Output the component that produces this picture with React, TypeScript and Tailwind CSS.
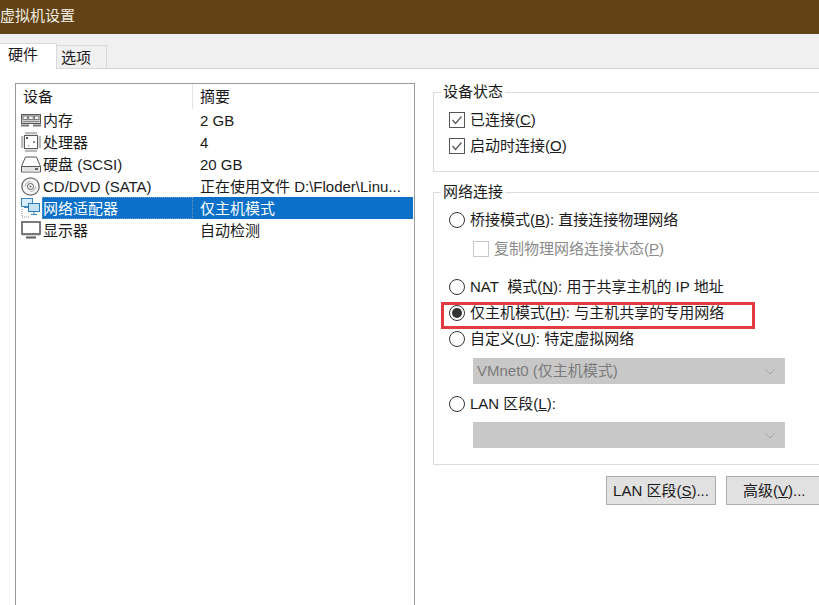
import type { ReactNode } from "react";

function MemoryIcon() {
  return (
    <svg width="20" height="13" viewBox="0 0 20 13" fill="none">
      <rect x="0.5" y="0.5" width="19" height="9" fill="#cfcfcf" stroke="#5a5a5a" />
      <rect x="2" y="2" width="4.5" height="3.5" fill="#f4f4f4" stroke="#5f5f5f" strokeWidth="0.8" />
      <rect x="7.75" y="2" width="4.5" height="3.5" fill="#f4f4f4" stroke="#5f5f5f" strokeWidth="0.8" />
      <rect x="13.5" y="2" width="4.5" height="3.5" fill="#f4f4f4" stroke="#5f5f5f" strokeWidth="0.8" />
      <path d="M2 7.5h16" stroke="#8a8a8a" />
      <path d="M0 11.5h8M12 11.5h8" stroke="#777" strokeWidth="2" />
    </svg>
  );
}

function CpuIcon() {
  return (
    <svg width="20" height="20" viewBox="0 0 20 20" fill="none">
      <rect x="3.5" y="3.5" width="13" height="13" fill="#fff" stroke="#5c5c5c" />
      <path d="M5 0v2.5M7 0v2.5M9 0v2.5M11 0v2.5M13 0v2.5M15 0v2.5M5 17.5v2.5M7 17.5v2.5M9 17.5v2.5M11 17.5v2.5M13 17.5v2.5M15 17.5v2.5M0 5h2.500M0 7h2.500M0 9h2.500M0 11h2.500M0 13h2.500M0 15h2.500M17.500 5h2.500M17.500 7h2.500M17.500 9h2.500M17.500 11h2.500M17.500 13h2.500M17.500 15h2.500" stroke="#777" />
      <rect x="5" y="5" width="2" height="2" fill="#555" />
      <rect x="12" y="9" width="2" height="2" fill="#888" />
      <rect x="7" y="13" width="1.500" height="1.500" fill="#aaa" />
    </svg>
  );
}

function DiskIcon() {
  return (
    <svg width="20" height="17" viewBox="0 0 20 17" fill="none">
      <path d="M4.500 1h11l4 9.500v5.500H.5v-5.500z" fill="#fff" stroke="#555" />
      <path d="M.5 10.500h19" stroke="#555" />
      <rect x="1.500" y="11" width="17" height="4.500" fill="#e2e2e2" />
      <rect x="14" y="12" width="3" height="2" fill="#666" />
    </svg>
  );
}

function CdIcon() {
  return (
    <svg width="19" height="19" viewBox="0 0 19 19" fill="none">
      <circle cx="9.500" cy="9.500" r="8.700" fill="#f4f4f4" stroke="#6a6a6a" strokeWidth="1.300" />
      <path d="M4.500 9.500a5 5 0 0 1 5-5" stroke="#aaa" />
      <path d="M14.500 9.500a5 5 0 0 1-5 5" stroke="#aaa" />
      <circle cx="9.500" cy="9.500" r="3" fill="#fff" stroke="#5a5a5a" />
      <circle cx="9.500" cy="9.500" r="1" fill="#5a5a5a" />
    </svg>
  );
}

function NetIcon() {
  return (
    <svg width="19" height="20" viewBox="0 0 19 20" fill="none">
      <rect x="0.5" y="0.5" width="11" height="8" fill="#d8edfb" stroke="#3d87bf" />
      <path d="M3 9.500h5" stroke="#3d87bf" />
      <rect x="7.500" y="5.500" width="11" height="8" fill="#c4e3f8" stroke="#2f7bb5" />
      <path d="M13 14v2" stroke="#3d87bf" />
      <path d="M10 16.500h6" stroke="#3d87bf" />
      <path d="M1 11v8h7" stroke="#999" strokeDasharray="1 1" />
    </svg>
  );
}

function MonitorIcon() {
  return (
    <svg width="20" height="18" viewBox="0 0 20 18" fill="none">
      <rect x="1" y="1" width="18" height="12" fill="#fff" stroke="#5a5a5a" strokeWidth="1.600" />
      <path d="M1 13.500h18" stroke="#777" strokeWidth="1.600" />
      <path d="M5 16.500h10" stroke="#5a5a5a" strokeWidth="2" />
    </svg>
  );
}

const rows = [
  { icon: <MemoryIcon />, name: "内存", value: "2 GB" },
  { icon: <CpuIcon />, name: "处理器", value: "4" },
  { icon: <DiskIcon />, name: "硬盘 (SCSI)", value: "20 GB" },
  { icon: <CdIcon />, name: "CD/DVD (SATA)", value: "正在使用文件 D:\\Floder\\Linu..." },
  { icon: <NetIcon />, name: "网络适配器", value: "仅主机模式", selected: true },
  { icon: <MonitorIcon />, name: "显示器", value: "自动检测" },
];

function Check({ children, disabled }: { children: ReactNode; disabled?: boolean }) {
  return (
    <div className={`flex items-center gap-[5px] h-[26px] ${disabled ? "text-[#8a8a8a]" : ""}`}>
      <span className={`w-[16px] h-[16px] border flex items-center justify-center ${disabled ? "border-[#c8c8c8]" : "border-[#555] bg-white"}`}>
        {!disabled && (
          <svg width="12" height="12" viewBox="0 0 12 12" fill="none">
            <path d="M1.500 6l3 3.500 6-7" stroke="#555" strokeWidth="1.200" />
          </svg>
        )}
      </span>
      <span>{children}</span>
    </div>
  );
}

function Radio({ children, on }: { children: ReactNode; on?: boolean }) {
  return (
    <div className="flex items-center gap-[5px] h-[26px]">
      <span className="w-[16px] h-[16px] rounded-full border border-[#333] bg-white flex items-center justify-center">
        {on && <span className="w-[10px] h-[10px] rounded-full bg-[#333]" />}
      </span>
      <span>{children}</span>
    </div>
  );
}

function Select({ text, className }: { text?: string; className: string }) {
  return (
    <div className={`ml-[24px] w-[312px] h-[26px] bg-[#c8c8c8] flex items-center justify-between pl-[4px] pr-[9px] text-[#7b7b7b] ${className}`}>
      <span>{text}</span>
      <svg width="12" height="7" viewBox="0 0 12 7" fill="none">
        <path d="M1 1l5 5 5-5" stroke="#a8a8a8" />
      </svg>
    </div>
  );
}

function Group({ title, className, children }: { title: string; className: string; children: ReactNode }) {
  return (
    <div className={`relative border border-r-0 border-[#dcdcdc] pl-[15px] pt-[14px] ${className}`}>
      <span className="absolute left-[7px] top-[-11px] bg-white px-[2px] leading-[20px]">{title}</span>
      {children}
    </div>
  );
}

export default function App() {
  return (
    <div className="w-[819px] h-[605px] overflow-hidden bg-white text-[15px] text-[#1a1a1a] font-['Liberation_Sans','Noto_Sans_CJK_SC',sans-serif]">
      <div className="h-[34px] bg-[#624315] text-[#f0ebe0] leading-[31px]">虚拟机设置</div>

      <div className="relative h-[35px] bg-[#f0f0f0] border-b border-[#d9d9d9]">
        <div className="absolute left-[-1px] bottom-[-1px] w-[58px] h-[26px] bg-white border border-[#d9d9d9] border-b-0 pl-[8px] leading-[22px]">硬件</div>
        <div className="absolute left-[57px] bottom-0 w-[50px] h-[23px] border border-l-0 border-b-0 border-[#d9d9d9] pl-[4px] leading-[24px]">选项</div>
      </div>

      <div className="flex pt-[14px]">
        <div className="ml-[15px] w-[400px] h-[530px] shrink-0 border border-b-0 border-[#9a9a9a]">
          <div className="flex h-[25px]">
            <div className="w-[177px] pl-[7px] border-r border-[#e5e5e5] leading-[25px]">设备</div>
            <div className="pl-[7px] leading-[25px]">摘要</div>
          </div>
          {rows.map((r) => (
            <div key={r.name} className="flex h-[22px] items-center">
              <div className="w-[26px] shrink-0 pl-[5px] flex items-center">{r.icon}</div>
              <div className={`w-[151px] h-[22px] leading-[23px] pl-[1px] ${r.selected ? "bg-[#0a70c8] text-white outline-1 outline-dotted -outline-offset-1 outline-[#6f9cc4]" : ""}`}>{r.name}</div>
              <div className={`flex-1 h-[22px] leading-[23px] pl-[7px] mr-[1px] ${r.selected ? "bg-[#0a70c8] text-white" : ""}`}>{r.value}</div>
            </div>
          ))}
        </div>

        <div className="ml-[18px] flex-1 flex flex-col pt-[9px]">
          <Group title="设备状态" className="h-[80px]">
            <Check>已连接(<u>C</u>)</Check>
            <Check>启动时连接(<u>O</u>)</Check>
          </Group>

          <Group title="网络连接" className="h-[273px] mt-[20px]">
            <Radio>桥接模式(<u>B</u>): 直接连接物理网络</Radio>
            <div className="ml-[24px] mt-[3px]">
              <Check disabled>复制物理网络连接状态(<u>P</u>)</Check>
            </div>
            <div className="mt-[12px]">
              <Radio>NAT&nbsp; 模式(<u>N</u>): 用于共享主机的 IP 地址</Radio>
              <Radio on>仅主机模式(<u>H</u>): 与主机共享的专用网络</Radio>
              <Radio>自定义(<u>U</u>): 特定虚拟网络</Radio>
            </div>
            <Select text="VMnet0 (仅主机模式)" className="mt-[6px]" />
            <div className="mt-[7px]">
              <Radio>LAN 区段(<u>L</u>):</Radio>
            </div>
            <Select className="mt-[5px]" />
            <div className="absolute left-[7px] top-[109px] w-[314px] h-[27px] border-[3px] border-[#e23c42]" />
          </Group>

          <div className="flex gap-[10px] mt-[11px] ml-[173px]">
            <div className="w-[110px] h-[29px] bg-[#e1e1e1] border border-[#adadad] text-center leading-[27px]">LAN 区段(<u>S</u>)...</div>
            <div className="w-[100px] h-[29px] bg-[#e1e1e1] border border-[#adadad] pl-[16px] leading-[27px]">高级(<u>V</u>)...</div>
          </div>
        </div>
      </div>
    </div>
  );
}
